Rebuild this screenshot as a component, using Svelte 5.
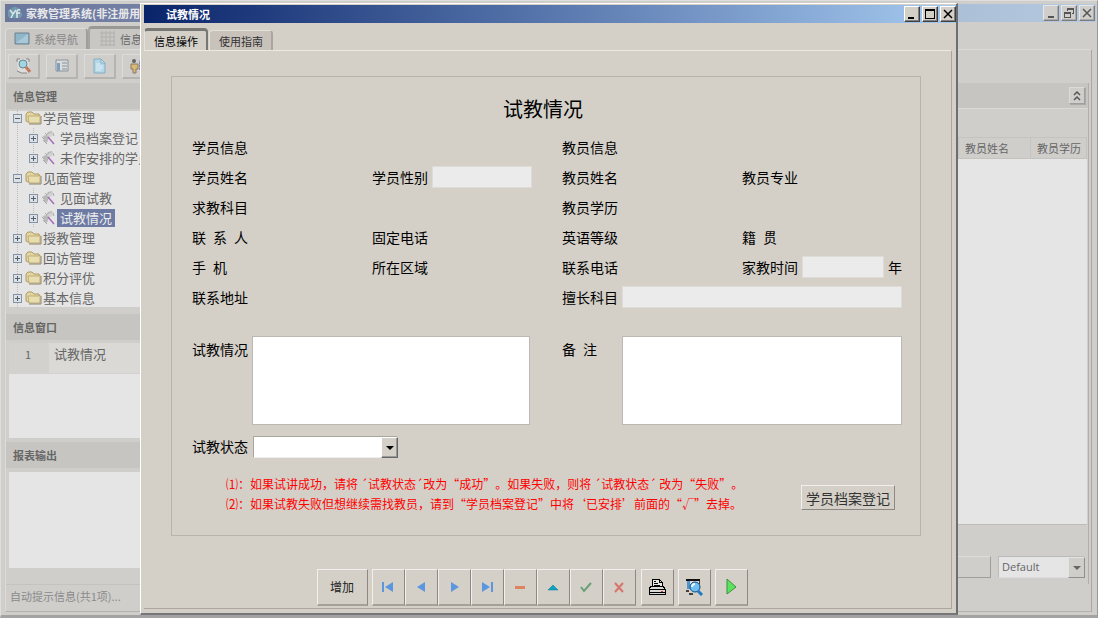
<script>
  let remark = '';
  let situation = '';
  let status = '';
  let reportFormat = 'Default';

  const tree = [
    { name: '学员管理', children: ['学员档案登记', '未作安排的学员'] },
    { name: '见面管理', children: ['见面试教', '试教情况'] },
    { name: '授教管理', children: [] },
    { name: '回访管理', children: [] },
    { name: '积分评优', children: [] },
    { name: '基本信息', children: [] },
  ];
  let selected = '试教情况';

  const navButtons = ['first', 'prev', 'next', 'last', 'delete', 'edit', 'post', 'cancel'];
</script>

<div class="desktop">
  <div class="main-window">
    <header class="titlebar">
      <svg class="logo" width="16" height="14" viewBox="0 0 16 14">
        <path d="M3 12Q0 11 1 7Q0 3 4 3Q7-1 11 2Q15 3 14 6Q17 9 13 12Z" fill="#7199ad" />
        <path d="M3 4l3 4 3-4M6 8l-2 4M13 4q-3-1-3 2v6M9 7h4" stroke="#dde6ea" stroke-width="1.500" fill="none" />
      </svg>
      <h1>家教管理系统(非注册用户)</h1>
      <div class="win-buttons">
        <button aria-label="最小化"><svg width="12" height="12"><path d="M3 9h6v2H3z" /></svg></button>
        <button aria-label="还原"
          ><svg width="12" height="12"
            ><path d="M4 1h7v6H9V6h1V3H5v1H4zM1 5h7v6H1zM2 7v3h5V7z" fill-rule="evenodd" /></svg
          ></button
        >
        <button aria-label="关闭"
          ><svg width="12" height="12"><path d="M2 2l8 8M10 2l-8 8" stroke="currentColor" stroke-width="1.500" /></svg></button
        >
      </div>
    </header>

    <nav class="tabs">
      <button class="tab">
        <svg width="16" height="14"><path d="M1 1h14v11H1z" fill="#8fb6c9" stroke="#6b7f8c" /><path d="M2 11L14 2v9z" fill="#a9c9d8" /></svg>
        系统导航
      </button>
      <button class="tab active">
        <svg width="16" height="16"><path d="M2 0v15M6 0v15M10 0v15M14 0v15M0 2h15M0 6h15M0 10h15M0 14h15" stroke="#b2b0ae" /></svg>
        信息
      </button>
    </nav>

    <div class="workspace">
      <div class="tools">
        <button aria-label="查找">
          <svg width="18" height="18">
            <path d="M2 2h12v14H5l-2-2z" fill="#dcdcda" />
            <path d="M2 5V2h3M11 2h3v3M2 14q4 3 10 2" stroke="#888" fill="none" />
            <circle cx="8" cy="7" r="4" fill="#9fd6e2" stroke="#6a8593" />
            <path d="M11 10l4 5" stroke="#c07a5e" stroke-width="3" />
          </svg>
        </button>
        <button aria-label="列表">
          <svg width="18" height="18">
            <path d="M3 3h12v11H3z" fill="#d9dde0" stroke="#8c9297" />
            <path d="M4 6h3v8H4z" fill="#7fa0bc" />
            <path d="M9 6h5M9 9h5M9 12h5" stroke="#8d8f92" />
          </svg>
        </button>
        <button aria-label="新建">
          <svg width="18" height="18">
            <path d="M3 2h7l4 4v10H3z" fill="#b4d7e8" stroke="#83adc2" />
            <path d="M10 2v4h4z" fill="#d9ebf2" stroke="#83adc2" />
            <path d="M5 7h4M5 9h7M5 11h7M5 13h5" stroke="#dff0f7" fill="none" />
          </svg>
        </button>
        <button aria-label="人员">
          <svg width="18" height="18">
            <circle cx="5" cy="4" r="2" fill="#666" />
            <path d="M2 7h7v5H7v4H4v-4H2z" fill="#d8b873" stroke="#8a7b64" />
            <path d="M10 3h8v10h-8z" fill="#a9a3cb" /><path d="M10 6h8M10 9h8M10 12h8" stroke="#666" />
          </svg>
        </button>
      </div>

      <div class="columns">
        <aside>
          <h2 class="bar">信息管理</h2>
          <div class="tree">
            <ul>
              {#each tree as group}
                <li>
                  <div class="node">
                    <span class="expander" class:open={group.children.length > 0}></span>
                    <svg class="folder" width="17" height="16" viewBox="0 0 17 16">
                      <path d="M1 11V4l2-2h4l2 2h5v8H3z" fill="#e0d7a4" stroke="#b39a63" />
                      <path d="M3 6h11l1-1v8H4z" fill="#e6deae" stroke="#b39a63" stroke-width=".7" />
                      <path d="M4 14h12V6" fill="none" stroke="#8f8569" />
                    </svg>
                    <button>{group.name}</button>
                  </div>
                  {#if group.children.length}
                    <ul class="children">
                      {#each group.children as child}
                        <li class="node">
                          <span class="expander"></span>
                          <svg class="leaf" width="16" height="16" viewBox="0 0 16 16">
                            <path d="M2 6l3-1 2-3 4-1 1 3-4 2-1 4-1 3-3-2z" fill="#b9b9b9" />
                            <path d="M1 7l2 2M2 10l2 2M4 12l2 2M4 3l2 2M12 3l1 3" stroke="#aaa" />
                            <path d="M6 5l5-3 1 3-4 3z" fill="#d3d3d3" />
                            <path d="M7 7l6 7" stroke="#a46bb9" stroke-width="1.500" />
                          </svg>
                          <button class:selected={selected === child} on:click={() => (selected = child)}>{child}</button>
                        </li>
                      {/each}
                    </ul>
                  {/if}
                </li>
              {/each}
            </ul>
          </div>

          <h2 class="bar">信息窗口</h2>
          <ol class="window-list">
            <li><span class="index">1</span><span>试教情况</span></li>
          </ol>

          <h2 class="bar">报表输出</h2>
          <div class="report-list"></div>
          <p class="status">自动提示信息(共1项)...</p>
        </aside>

        <section class="data">
          <div class="bar data-bar">
            <button class="collapse" aria-label="收起">
              <svg width="10" height="12"><path d="M2 5l3-3 3 3M2 10l3-3 3 3" stroke="#555" stroke-width="1.500" fill="none" /></svg>
            </button>
          </div>
          <div class="grid-area">
            <table>
              <thead><tr><th class="rest"></th><th>教员姓名</th><th class="last">教员学历</th></tr></thead>
            </table>
          </div>
          <div class="data-foot">
            <button class="wide" aria-label="输出"></button>
            <span class="drop faded">
              <select aria-label="报表格式" bind:value={reportFormat}><option>Default</option></select>
              <i></i>
            </span>
          </div>
        </section>
      </div>
    </div>
  </div>

  <div class="dialog" role="dialog" aria-labelledby="dialog-title">
    <header class="titlebar">
      <h1 id="dialog-title">试教情况</h1>
      <div class="win-buttons">
        <button aria-label="最小化"><svg width="12" height="12"><path d="M2 9h6v2H2z" /></svg></button>
        <button aria-label="最大化"
          ><svg width="12" height="12"><path d="M1 1h10v10H1zM2 3v7h8V3z" fill-rule="evenodd" /></svg></button
        >
        <button aria-label="关闭"
          ><svg width="12" height="12"><path d="M2 2l8 8M10 2l-8 8" stroke="currentColor" stroke-width="1.500" /></svg></button
        >
      </div>
    </header>
    <nav class="tabs">
      <button class="tab active">信息操作</button>
      <button class="tab">使用指南</button>
    </nav>

    <div class="page">
      <form class="group" on:submit|preventDefault>
        <h2>试教情况</h2>
        <div class="fields">
          <span class="half">学员信息</span>
          <span class="half">教员信息</span>

          <span>学员姓名</span>
          <span class="field"><label for="sex">学员性别</label><input id="sex" class="short" readonly /></span>
          <span>教员姓名</span>
          <span>教员专业</span>

          <span class="half">求教科目</span>
          <span class="half">教员学历</span>

          <span>联&ensp;系&ensp;人</span>
          <span>固定电话</span>
          <span>英语等级</span>
          <span>籍&ensp;贯</span>

          <span>手&ensp;机</span>
          <span>所在区域</span>
          <span>联系电话</span>
          <span class="field"><label for="years">家教时间</label><input id="years" readonly />年</span>

          <span class="half">联系地址</span>
          <span class="half field"><label for="subject">擅长科目</label><input id="subject" readonly /></span>
        </div>

        <div class="memos">
          <div class="memo first">
            <label for="situation">试教情况</label>
            <textarea id="situation" bind:value={situation}></textarea>
          </div>
          <div class="memo">
            <label for="remark">备&ensp;注</label>
            <textarea id="remark" bind:value={remark}></textarea>
          </div>
        </div>

        <div class="state">
          <label for="state">试教状态</label>
          <span class="drop">
            <select id="state" bind:value={status}>
              <option value=""></option>
              <option value="成功">成功</option>
              <option value="失败">失败</option>
            </select>
            <i></i>
          </span>
        </div>

        <div class="bottom">
          <div class="notes">
            <p>⑴：如果试讲成功，请将 ´试教状态´改为“成功”。如果失败，则将 ´试教状态´ 改为“失败”。</p>
            <p>⑵：如果试教失败但想继续需找教员，请到“学员档案登记”中将‘已安排’前面的“√”去掉。</p>
          </div>
          <button type="button" class="register">学员档案登记</button>
        </div>
      </form>

      <div class="actions">
        <button class="add">增加</button>
        <div class="navigator">
          {#each navButtons as name}
            <button aria-label={name}>
              <svg width="16" height="16" viewBox="0 0 16 16">
                {#if name === 'first'}
                  <path d="M2 3h2v10H2zM13 3v10L5 8z" fill="#5b97df" />
                {:else if name === 'prev'}
                  <path d="M12 3v10L4 8z" fill="#5b97df" />
                {:else if name === 'next'}
                  <path d="M5 3v10l8-5z" fill="#5b97df" />
                {:else if name === 'last'}
                  <path d="M12 3h2v10h-2zM3 3v10l8-5z" fill="#5b97df" />
                {:else if name === 'delete'}
                  <path d="M3 7h10v3H3z" fill="#dd8560" />
                {:else if name === 'edit'}
                  <path d="M3 11l5-5 5 5z" fill="#0fa3bd" stroke="#087f98" stroke-width=".5" />
                {:else if name === 'post'}
                  <path d="M3 8l3 4 7-8" stroke="#6a9f76" stroke-width="2" fill="none" />
                {:else}
                  <path d="M4 4l8 9M12 4l-8 9" stroke="#d8756b" stroke-width="2" />
                {/if}
              </svg>
            </button>
          {/each}
        </div>
        <button aria-label="打印">
          <svg width="18" height="18" viewBox="0 0 18 18" shape-rendering="crispEdges">
            <path d="M4 8V1h7l3 3v4" fill="#e8e8e4" stroke="#000" />
            <path d="M6 3h2M6 5h4M6 7h6M11 1v3h3" stroke="#000" fill="none" />
            <path d="M3 8h12l2 3v5H1v-5z" fill="#d9d9d6" stroke="#000" />
            <path d="M1 11h16M1 14h16" stroke="#000" />
            <path d="M13 13h2" stroke="#d33" />
          </svg>
        </button>
        <button aria-label="预览">
          <svg width="20" height="18" viewBox="0 0 20 18">
            <path d="M2 2h14" stroke="#111" stroke-width="2" />
            <path d="M2 13h3M5 16h4M15 3v3" stroke="#111" stroke-width="1.500" />
            <path d="M3 3h3v8H3z" fill="#4f95cd" /><path d="M6 3h9v9H6z" fill="#ddd" />
            <circle cx="11" cy="9" r="5" fill="#6fc1f5" stroke="#154a79" />
            <path d="M8 9q0-3 3-3" stroke="#e9f8ff" stroke-width="2" fill="none" />
            <path d="M14 13l4 4" stroke="#1c7bc4" stroke-width="3" />
          </svg>
        </button>
        <button aria-label="执行">
          <svg width="16" height="18" viewBox="0 0 16 18"><path d="M4 1l9 8-9 7z" fill="#5be35b" stroke="#3f8f46" /></svg>
        </button>
      </div>
    </div>
  </div>
</div>

<style>
  :global(body) {
    margin: 0;
    background: #cfcecb;
  }
  .desktop {
    position: relative;
    min-height: 100vh;
    overflow: hidden;
    font: 11px/20px 'Noto Sans CJK SC', sans-serif;
    text-spacing-trim: space-all;
    color: #000;
  }
  .desktop * {
    box-sizing: border-box;
  }
  h1,
  h2,
  p,
  ul,
  ol {
    margin: 0;
    padding: 0;
    list-style: none;
  }
  h1,
  h2 {
    font-size: 11px;
  }
  button,
  input,
  select,
  textarea {
    margin: 0;
    padding: 0;
    font: inherit;
    color: inherit;
    border-radius: 0;
  }
  button {
    border: 1px solid;
    border-color: #f2f0ec #8c8984 #8c8984 #f2f0ec;
    background: #d4d0c8;
  }
  svg {
    display: block;
    flex: none;
    fill: currentColor;
  }

  /* shared window chrome */
  .titlebar {
    display: flex;
    align-items: center;
    flex: none;
    height: 18px;
    color: #fff;
  }
  .titlebar h1 {
    flex: 1;
    line-height: 18px;
    white-space: nowrap;
  }
  .win-buttons {
    display: flex;
    gap: 2px;
    color: #000;
  }
  .win-buttons button {
    width: 16px;
    height: 16px;
    padding: 1px;
    border-color: #fff #404040 #404040 #fff;
    box-shadow: inset -1px -1px #808080;
  }
  .tabs {
    display: flex;
    align-items: flex-end;
    flex: none;
  }
  .tab {
    display: flex;
    align-items: center;
    gap: 4px;
    height: 20px;
    padding: 0 8px;
    border: 1px solid #e4e1dc;
    border-right: 2px solid #aaa69f;
    border-bottom: 0;
    border-radius: 4px 4px 0 0;
    background: #c8c2ba;
    white-space: nowrap;
  }
  .tab.active {
    height: 22px;
    border-top: 3px solid #777774;
    border-right: 2px solid #777774;
    background: #d4d0c8;
  }

  /* main window, dimmed while the dialog is open */
  .main-window {
    display: flex;
    flex-direction: column;
    height: 100vh;
    min-height: 618px;
    padding: 3px 0 3px 4px;
    border: 1px solid #dededc;
    border-right-color: #9a9a9a;
    border-bottom: 3px solid #a3a3a4;
    background: #cfcecb;
    color: #666;
  }
  .main-window .titlebar {
    gap: 3px;
    margin-right: 1px;
    padding: 0 1px 0 2px;
    background: linear-gradient(90deg, #6a769c, #b5cae0);
    color: #e8e8ea;
  }
  .main-window button {
    border-color: #dddcda #a09f9d #a09f9d #dddcda;
    background: #cfcecb;
  }
  .main-window .win-buttons {
    color: #555;
  }
  .main-window .win-buttons button {
    border-color: #e6e6e6 #7c7c7c #7c7c7c #e6e6e6;
    box-shadow: inset -1px -1px #aaa;
  }
  .main-window .tabs {
    height: 27px;
  }
  .main-window .tab {
    gap: 4px;
    height: 21px;
    background: #c9c7c4;
    color: #888;
  }
  .main-window .tab:first-child {
    padding-left: 8px;
  }
  .main-window .tab.active {
    width: 90px;
    height: 23px;
    padding-left: 10px;
    border-top-color: #989896;
    border-left: 2px solid #a5a5a3;
    color: #666;
  }
  .workspace {
    display: flex;
    flex-direction: column;
    flex: 1;
    min-height: 0;
    margin-right: 5px;
    padding: 4px 2px 0 0;
    border: 1px solid #dcdbd8;
    border-right-color: #a9a8a5;
    border-bottom-color: #b2b1ae;
  }
  .tools {
    display: flex;
    gap: 6px;
    margin-bottom: 4px;
    padding: 0 2px;
  }
  .tools button {
    display: flex;
    align-items: center;
    justify-content: center;
    width: 32px;
    height: 25px;
    border-right-width: 2px;
    border-bottom-width: 2px;
    border-right-color: #b5b4b1;
    border-bottom-color: #b5b4b1;
  }
  .columns {
    display: flex;
    flex: 1;
    min-height: 0;
  }
  aside {
    display: flex;
    flex-direction: column;
    flex: 0 0 190px;
  }
  .bar {
    flex: none;
    height: 26px;
    padding-left: 7px;
    line-height: 26px;
    background: #c6c5c1;
  }
  .tree {
    flex: none;
    height: 196px;
    margin: 2px 0 7px 3px;
    background: #e5e5e5;
    font-size: 13px;
  }
  .tree > ul {
    position: relative;
    top: -3px;
    margin-left: 8px;
    background: linear-gradient(#bbb 50%, transparent 50%) 0 9px / 1px 2px repeat-y;
  }
  .node {
    display: flex;
    align-items: center;
    height: 20px;
    margin-left: -4px;
  }
  .children {
    margin-left: 16px;
    background: linear-gradient(#bbb 50%, transparent 50%) 0 0 / 1px 2px repeat-y;
  }
  .expander {
    flex: none;
    width: 9px;
    height: 9px;
    border: 1px solid #8794a5;
    background:
      linear-gradient(#56616f, #56616f) center / 5px 1px no-repeat,
      linear-gradient(#56616f, #56616f) center / 1px 5px no-repeat,
      #dce1e6;
  }
  .expander.open {
    background:
      linear-gradient(#56616f, #56616f) center / 5px 1px no-repeat,
      #dce1e6;
  }
  .folder {
    margin-left: 3px;
  }
  .leaf {
    margin-left: 3px;
  }
  .tree button {
    height: 18px;
    padding: 0 1px;
    border: 0;
    background: none;
    line-height: 18px;
    white-space: nowrap;
  }
  .tree .children button {
    padding: 0 3px;
  }
  .tree button.selected {
    background: #6d7aa3;
    color: #eee;
  }
  .window-list {
    flex: none;
    height: 95px;
    margin: 3px 0 4px 3px;
    background: #e5e5e5;
  }
  .window-list li {
    display: flex;
    height: 31px;
    border-bottom: 1px solid #d3d2cf;
    background: #dad9d5;
    font-size: 13px;
    line-height: 22px;
  }
  .index {
    width: 40px;
    margin-right: 5px;
    padding-right: 2px;
    background: #d2d1cd;
    font-size: 11px;
    text-align: center;
  }
  .report-list {
    flex: 1;
    margin: 4px 0 16px 3px;
    background: #e5e5e5;
  }
  .status {
    flex: none;
    height: 27px;
    padding-left: 4px;
    border-top: 1px solid #c4c3c0;
    line-height: 22px;
    color: #8a8a8a;
  }
  .data {
    display: flex;
    flex-direction: column;
    flex: 1;
    margin-bottom: 27px;
    border-right: 1px solid #b0afac;
  }
  .data-bar {
    display: flex;
    align-items: center;
    justify-content: flex-end;
    padding-right: 3px;
    border-bottom: 1px solid #dad9d6;
  }
  .collapse {
    display: grid;
    place-items: center;
    width: 16px;
    height: 17px;
    box-shadow: 1px 1px #aaa;
  }
  .grid-area {
    flex: 1;
    margin: 28px 1px 31px 0;
    border-bottom: 1px solid #bdbcb9;
    background: #e5e5e5;
  }
  table {
    width: 100%;
    border-spacing: 0;
    table-layout: fixed;
  }
  th {
    width: 72px;
    height: 22px;
    padding: 0 0 0 6px;
    border: 1px solid #c4c3c0;
    border-width: 1px 1px 1px 0;
    background: #cfcecb;
    font-weight: 400;
    text-align: left;
    line-height: 20px;
  }
  th.last {
    width: 56px;
  }
  th.rest {
    width: auto;
  }
  .data-foot {
    display: flex;
    justify-content: flex-end;
    gap: 7px;
    margin-bottom: 6px;
    padding-right: 3px;
  }
  .data-foot .wide {
    width: 80px;
    height: 22px;
  }

  .drop {
    position: relative;
    display: block;
    width: 145px;
    height: 22px;
  }
  .drop select {
    width: 100%;
    height: 100%;
    padding-left: 4px;
    border: 1px solid;
    border-color: #aaa69e #f0eeea #f0eeea #aaa69e;
    background: #fff;
    appearance: none;
  }
  .drop i {
    position: absolute;
    top: 1px;
    right: 0;
    bottom: 0;
    display: grid;
    place-items: center;
    width: 17px;
    border: 1px solid;
    border-color: #fff #666 #666 #fff;
    box-shadow: inset -1px -1px #999;
    background: #d4d0c8;
    pointer-events: none;
  }
  .drop i::after {
    content: '';
    border: 4px solid transparent;
    border-top-color: currentColor;
    border-bottom: 0;
  }
  .drop.faded {
    width: 87px;
  }
  .drop.faded select {
    padding-left: 3px;
    border-color: #bbb #ddd #ddd #bbb;
    background: #e5e5e5;
    font-family: 'Open Sans', sans-serif;
  }
  .drop.faded i {
    border-color: #e3e3e3 #8f8f8f #8f8f8f #e3e3e3;
    box-shadow: none;
    background: #cfcecb;
  }

  /* dialog */
  .dialog {
    position: absolute;
    top: 3px;
    right: 140px;
    bottom: 3px;
    left: 140px;
    display: flex;
    flex-direction: column;
    padding: 1px 0 4px 3px;
    border: 1px solid #fff;
    border-right: 2px solid #6e6e70;
    border-bottom: 2px solid #77777a;
    background: #d4d0c8;
  }
  .dialog .titlebar {
    padding-left: 22px;
    background: linear-gradient(90deg, #0a246a, #a6caf0);
  }
  .dialog .tabs {
    height: 27px;
    gap: 1px;
  }
  .dialog .tab {
    padding: 0 8px 0 9px;
  }
  .dialog .tab:not(.active) {
    color: #333;
  }
  .page {
    display: flex;
    flex-direction: column;
    justify-content: space-between;
    flex: 1;
    margin-right: 4px;
    padding: 25px 30px 2px 27px;
    border: 1px solid #ece9e3;
    border-left: 0;
    border-right-color: #aaa69f;
    border-bottom-color: #aaa69f;
  }
  .group {
    padding: 16px 18px 21px 20px;
    border: 1px solid #b8b4ad;
    font-size: 14px;
  }
  .group h2 {
    margin-bottom: 8px;
    padding-right: 8px;
    font-size: 20px;
    font-weight: 400;
    line-height: 32px;
    text-align: center;
  }
  .fields,
  .memos {
    display: grid;
    grid-template-columns: minmax(0, 18fr) minmax(0, 19fr) minmax(0, 18fr) minmax(0, 16fr);
  }
  .fields {
    grid-auto-rows: 30px;
    margin-bottom: 23px;
    line-height: 28px;
  }
  .half {
    grid-column: span 2;
  }
  .field {
    display: flex;
    gap: 4px;
  }
  .field input {
    flex: 1;
    min-width: 0;
    height: 22px;
    margin-top: 3px;
    border: 1px solid #dfdcd7;
    background: #ebebeb;
  }
  .field input.short {
    flex: 0 0 100px;
  }
  .memo {
    display: flex;
    grid-column: span 2;
  }
  .memo.first {
    padding-right: 32px;
  }
  .memo label {
    width: 60px;
    padding-top: 3px;
  }
  .memo textarea {
    flex: 1;
    min-width: 0;
    height: 89px;
    border: 1px solid #bdb9b2;
    background: #fff;
    resize: none;
  }
  .state {
    display: flex;
    align-items: flex-start;
    gap: 5px;
    height: 26px;
    margin-top: 11px;
  }
  .bottom {
    display: flex;
    align-items: center;
    justify-content: space-between;
    margin-top: 12px;
    padding: 0 7px 0 34px;
  }
  .notes {
    font-size: 12px;
    color: #f00;
    white-space: nowrap;
  }
  .register {
    width: 94px;
    height: 25px;
    margin-top: 7px;
    line-height: 20px;
    color: #333;
    white-space: nowrap;
  }
  .actions {
    display: flex;
    justify-content: center;
    gap: 4px;
    padding-right: 28px;
    font-size: 12px;
  }
  .actions button {
    display: grid;
    place-items: center;
    width: 33px;
    height: 37px;
    border-bottom-width: 2px;
    border-bottom-color: #a5a199;
  }
  .actions .add {
    width: 51px;
    color: #222;
  }
  .navigator {
    display: flex;
    margin-right: 1px;
  }
</style>
